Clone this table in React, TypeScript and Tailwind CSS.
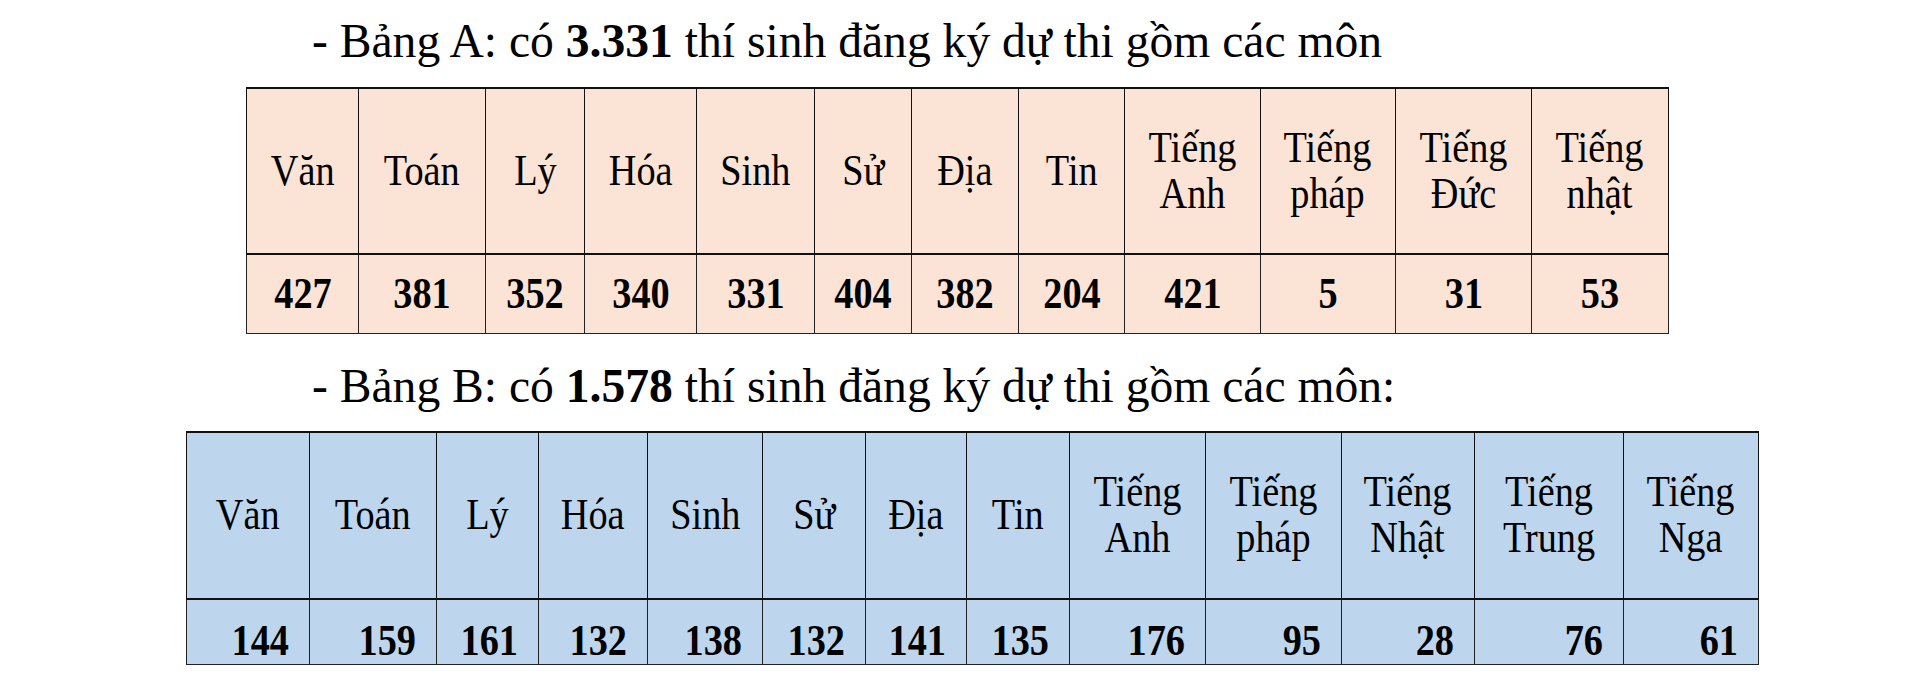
const bangA = [
  { name: ["Văn"], count: "427", w: "w-[112px]" },
  { name: ["Toán"], count: "381", w: "w-[127px]" },
  { name: ["Lý"], count: "352", w: "w-[99px]" },
  { name: ["Hóa"], count: "340", w: "w-[112px]" },
  { name: ["Sinh"], count: "331", w: "w-[118px]" },
  { name: ["Sử"], count: "404", w: "w-[97px]" },
  { name: ["Địa"], count: "382", w: "w-[107px]" },
  { name: ["Tin"], count: "204", w: "w-[106px]" },
  { name: ["Tiếng", "Anh"], count: "421", w: "w-[136px]" },
  { name: ["Tiếng", "pháp"], count: "5", w: "w-[135px]" },
  { name: ["Tiếng", "Đức"], count: "31", w: "w-[136px]" },
  { name: ["Tiếng", "nhật"], count: "53", w: "w-[137px]" },
];

const bangB = [
  { name: ["Văn"], count: "144", w: "w-[123px]" },
  { name: ["Toán"], count: "159", w: "w-[127px]" },
  { name: ["Lý"], count: "161", w: "w-[102px]" },
  { name: ["Hóa"], count: "132", w: "w-[109px]" },
  { name: ["Sinh"], count: "138", w: "w-[115px]" },
  { name: ["Sử"], count: "132", w: "w-[103px]" },
  { name: ["Địa"], count: "141", w: "w-[101px]" },
  { name: ["Tin"], count: "135", w: "w-[103px]" },
  { name: ["Tiếng", "Anh"], count: "176", w: "w-[136px]" },
  { name: ["Tiếng", "pháp"], count: "95", w: "w-[136px]" },
  { name: ["Tiếng", "Nhật"], count: "28", w: "w-[133px]" },
  { name: ["Tiếng", "Trung"], count: "76", w: "w-[149px]" },
  { name: ["Tiếng", "Nga"], count: "61", w: "w-[135px]" },
];

type Mon = { name: string[]; count: string; w: string };

function HeaderText({ lines }: { lines: string[] }) {
  return (
    <span className="inline-block scale-x-[0.87]">
      {lines.map((l, i) => (
        <span key={i} className="block">
          {l}
        </span>
      ))}
    </span>
  );
}

function BangA({ rows }: { rows: Mon[] }) {
  return (
    <table className="ml-[246px] mt-[19px] w-[1422px] table-fixed border-collapse bg-[#fbe4d5] text-[44px] leading-[46px]">
      <colgroup>
        {rows.map((r) => (
          <col key={r.name.join(" ")} className={r.w} />
        ))}
      </colgroup>
      <tbody>
        <tr className="h-[166px]">
          {rows.map((r) => (
            <td
              key={r.name.join(" ")}
              className="border border-t-2 border-b-2 border-[#111] p-0 text-center align-middle"
            >
              <HeaderText lines={r.name} />
            </td>
          ))}
        </tr>
        <tr className="h-[79px]">
          {rows.map((r) => (
            <td
              key={r.name.join(" ")}
              className="border border-[#222] p-0 text-center align-middle font-bold"
            >
              <span className="inline-block scale-x-[0.87]">{r.count}</span>
            </td>
          ))}
        </tr>
      </tbody>
    </table>
  );
}

function BangB({ rows }: { rows: Mon[] }) {
  return (
    <table className="ml-[186px] mt-[18px] w-[1572px] table-fixed border-collapse bg-[#bdd6ee] text-[44px] leading-[46px]">
      <colgroup>
        {rows.map((r) => (
          <col key={r.name.join(" ")} className={r.w} />
        ))}
      </colgroup>
      <tbody>
        <tr className="h-[167px]">
          {rows.map((r) => (
            <td
              key={r.name.join(" ")}
              className="border border-t-2 border-b-2 border-[#111] p-0 text-center align-middle"
            >
              <HeaderText lines={r.name} />
            </td>
          ))}
        </tr>
        <tr className="h-[66px]">
          {rows.map((r) => (
            <td
              key={r.name.join(" ")}
              className="border border-[#222] p-0 pr-[20px] text-right align-bottom font-bold"
            >
              <span className="inline-block origin-right scale-x-[0.87]">{r.count}</span>
            </td>
          ))}
        </tr>
      </tbody>
    </table>
  );
}

export default function App() {
  return (
    <div className="h-[684px] w-[1920px] overflow-hidden bg-white font-['Liberation_Serif','Times_New_Roman',serif] text-black">
      <p className="pl-[312px] pt-[14px] text-[47.6px] leading-[54px]">
        - Bảng A: có <b>3.331</b> thí sinh đăng ký dự thi gồm các môn
      </p>
      <BangA rows={bangA} />
      <p className="mt-[25px] pl-[312px] text-[47.6px] leading-[54px]">
        - Bảng B: có <b>1.578</b> thí sinh đăng ký dự thi gồm các môn:
      </p>
      <BangB rows={bangB} />
    </div>
  );
}
